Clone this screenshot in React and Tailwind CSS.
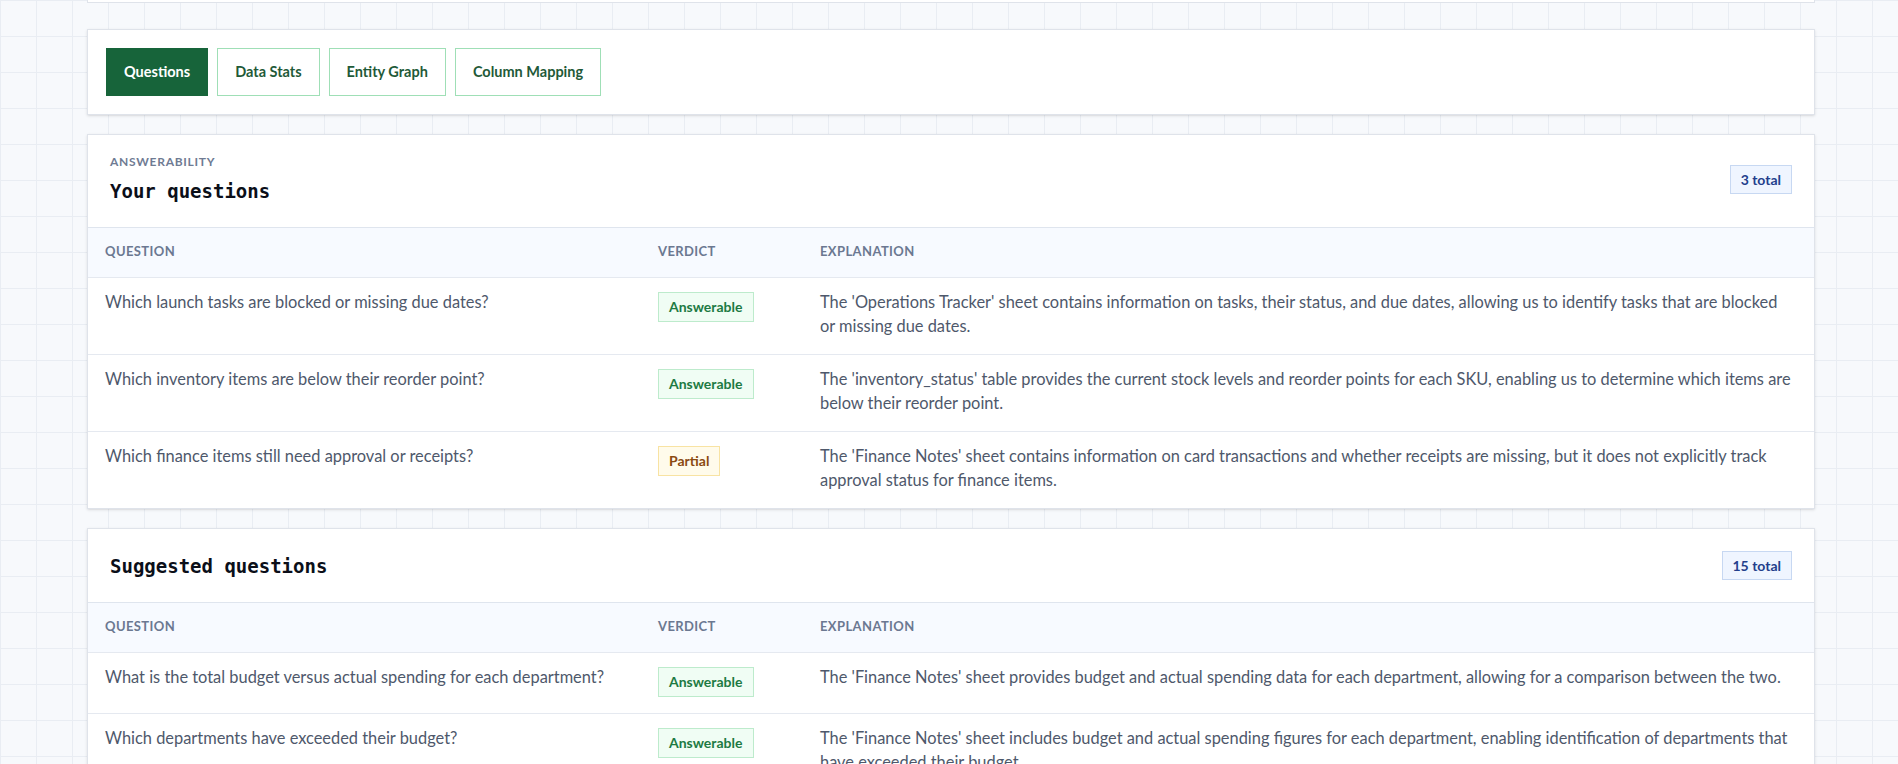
import React from "react";

const SANS = { fontFamily: "Lato, 'Noto Sans', sans-serif" };
const MONO = { fontFamily: "'DejaVu Sans Mono', 'Liberation Mono', monospace" };

const tabs = ["Questions", "Data Stats", "Entity Graph", "Column Mapping"];

const yourQuestions = [
  {
    q: "Which launch tasks are blocked or missing due dates?",
    v: "Answerable",
    e: "The 'Operations Tracker' sheet contains information on tasks, their status, and due dates, allowing us to identify tasks that are blocked or missing due dates.",
  },
  {
    q: "Which inventory items are below their reorder point?",
    v: "Answerable",
    e: "The 'inventory_status' table provides the current stock levels and reorder points for each SKU, enabling us to determine which items are below their reorder point.",
  },
  {
    q: "Which finance items still need approval or receipts?",
    v: "Partial",
    e: "The 'Finance Notes' sheet contains information on card transactions and whether receipts are missing, but it does not explicitly track approval status for finance items.",
  },
];

const suggested = [
  {
    q: "What is the total budget versus actual spending for each department?",
    v: "Answerable",
    e: "The 'Finance Notes' sheet provides budget and actual spending data for each department, allowing for a comparison between the two.",
  },
  {
    q: "Which departments have exceeded their budget?",
    v: "Answerable",
    e: "The 'Finance Notes' sheet includes budget and actual spending figures for each department, enabling identification of departments that have exceeded their budget.",
  },
  {
    q: "Which SKUs have the lowest stock relative to their reorder point?",
    v: "Answerable",
    e: "The 'inventory_status' table lists on-hand quantities and reorder points for each SKU, so the gap between them can be ranked.",
  },
];

function Verdict({ value }) {
  if (value === "Partial") {
    return (
      <span className="inline-flex h-[30px] items-center border border-[#f8e3a3] bg-[#fffbeb] px-[10px] text-[14px] font-bold text-[#8a4a12]">
        Partial
      </span>
    );
  }
  return (
    <span className="inline-flex h-[30px] items-center border border-[#bdebcc] bg-[#f0fdf4] px-[10px] text-[14px] font-bold text-[#1d7a43]">
      {value}
    </span>
  );
}

function CountBadge({ children }) {
  return (
    <span className="inline-flex h-[29px] items-center border border-[#c7d8f2] bg-[#eff5ff] px-[10px] text-[14px] font-bold text-[#233f8c]">
      {children}
    </span>
  );
}

function QuestionTable({ rows }) {
  return (
    <div>
      <div className="grid h-[50px] grid-cols-[552px_162px_1fr] items-center border-t border-[#dfe5ee] bg-[#f7faff] pb-[2px] text-[13px] font-bold uppercase tracking-[0.03em] text-[#6b7891]">
        <div className="px-[17px]">Question</div>
        <div className="px-[18px]">Verdict</div>
        <div className="px-[18px]">Explanation</div>
      </div>
      {rows.map((r) => (
        <div
          key={r.q}
          className="grid grid-cols-[552px_162px_1fr] border-t border-[#e5e9f0] pb-[16px] pt-[12px] text-[16.4px] leading-[24px] text-[#4e586b]"
        >
          <div className="px-[17px]">{r.q}</div>
          <div className="px-[18px] pt-[2px]">
            <Verdict value={r.v} />
          </div>
          <div className="px-[18px]">{r.e}</div>
        </div>
      ))}
    </div>
  );
}

export default function App() {
  return (
    <div
      style={SANS}
      className="h-[764px] overflow-hidden bg-[#f7f9fc] bg-[linear-gradient(to_right,#e9edf3_1px,transparent_1px),linear-gradient(to_bottom,#e9edf3_1px,transparent_1px)] bg-[size:36px_36px]"
    >
      <div className="ml-[87px] flex w-[1728px] flex-col">
        {/* tail of the panel above, scrolled out of view */}
        <div className="h-[3px] border-x border-b border-[#dfe3ea] bg-white" />

        {/* tab bar */}
        <div className="mt-[26px] flex gap-[9px] border border-[#dfe3ea] bg-white p-[18px] shadow-sm">
          {tabs.map((t, i) => (
            <button
              key={t}
              className={
                i === 0
                  ? "h-12 border border-[#17643a] bg-[#17643a] px-[17px] text-[14.5px] font-bold text-white"
                  : "h-12 border border-[#9fdfb6] bg-white px-[17px] text-[14.5px] font-bold text-[#1f5a38]"
              }
            >
              {t}
            </button>
          ))}
        </div>

        {/* your questions */}
        <div className="mt-[19px] border border-[#dfe3ea] bg-white shadow-sm">
          <div className="flex items-center justify-between px-[22px] pb-[22px] pt-[19px]">
            <div>
              <div className="text-[12px] font-bold uppercase leading-[16px] tracking-[0.06em] text-[#6f7b93]">
                Answerability
              </div>
              <div style={MONO} className="mt-[7px] text-[19px] font-bold leading-[28px] text-[#0b0f19]">
                Your questions
              </div>
            </div>
            <CountBadge>3 total</CountBadge>
          </div>
          <QuestionTable rows={yourQuestions} />
        </div>

        {/* suggested questions */}
        <div className="mt-[19px] border border-[#dfe3ea] bg-white shadow-sm">
          <div className="flex items-center justify-between px-[22px] py-[22px]">
            <div style={MONO} className="text-[19px] font-bold leading-[28px] text-[#0b0f19]">
              Suggested questions
            </div>
            <CountBadge>15 total</CountBadge>
          </div>
          <QuestionTable rows={suggested} />
        </div>
      </div>
    </div>
  );
}
